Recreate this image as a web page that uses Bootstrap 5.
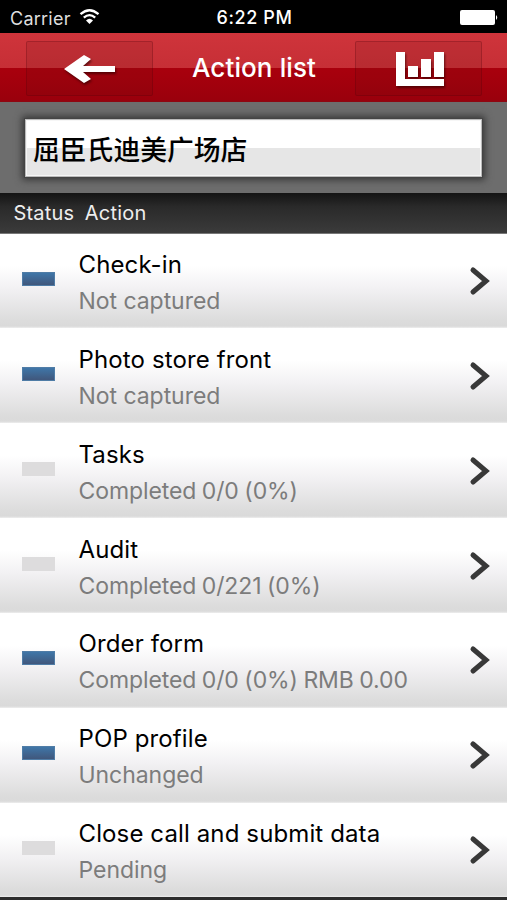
<!DOCTYPE html>
<html lang="en">
<head>
<meta charset="utf-8">
<meta name="viewport" content="width=device-width, initial-scale=1">
<title>Action list</title>
<link href="https://cdn.jsdelivr.net/npm/bootstrap@5.3.0/dist/css/bootstrap.min.css" rel="stylesheet">
<style>
body{font-family:Inter,"Noto Sans CJK SC",sans-serif;background:#2d2d2d;height:900px;overflow:hidden}
.statusbar{height:33px;background:#000;color:#fff;font-size:18px;line-height:37px;padding:0 8px 0 10px}
.statusbar .carrier{color:#dedede;letter-spacing:.25px}
.statusbar .clock{font-weight:500;font-size:18px;letter-spacing:.6px;padding-left:2px;line-height:36px}
.topbar{height:69px;padding:8px 25px 6px 26px;background:linear-gradient(#cf343b 0,#c62f36 35px,#a9000d 35px,#9a000c 67px,#8a0a14 69px)}
.tool{width:127px;height:55px;border:1px solid rgba(80,0,10,.25);border-radius:2px;background:rgba(90,20,20,.12)}
.tool svg{filter:drop-shadow(1px 2px 1px rgba(50,0,0,.65))}
.heading{font-size:26px;font-weight:500;color:#fff;letter-spacing:.1px;line-height:54px}
.storebar{height:90.500px;padding:17px 25px 15px;background:#6d6d6d}
.store{height:58px;border:1px solid #bbb;outline:1px solid #444;background:linear-gradient(#fff 50%,#e6e6e6 50%);box-shadow:0 0 7px 3px #383838,inset 0 0 0 1px #f6f6f6;font-size:26.800px;font-weight:500;color:#000;padding-left:7px;line-height:60px}
.columns{height:41.100px;background:linear-gradient(#141414,#2a2a2a 35%,#3b3b3b);border-bottom:1px solid #777;color:#eee;font-size:20px;line-height:41px;padding-left:13.500px;gap:10.500px;letter-spacing:.2px}
.action{height:94.860px;border:0;border-radius:0;padding:0 17px 0 22px;background:linear-gradient(#fff 0,#fff 34%,#f2f1f3 58%,#dcdcdc 92%,#dadada 98%,#eee 100%)}
.action:last-child{height:94.200px}
.state{width:33px;height:14px;margin-top:-4px;margin-right:23.500px;background:#dddcdd}
.state.done{background:linear-gradient(#3f76a8,#40577c);border:1px solid #4f7ca6}
.label{padding-top:5px}
.name{font-size:24px;line-height:36px;color:#000;letter-spacing:.12px}
.detail{font-size:23px;line-height:37px;color:#7c7c7c;letter-spacing:-.05px}
.detail.progress-note{letter-spacing:-.1px;word-spacing:-.8px}
</style>
</head>
<body>
<header>
  <div class="statusbar d-flex justify-content-between position-relative">
    <div class="d-flex"><span class="carrier">Carrier</span>
      <svg class="ms-2" width="21" height="33" viewBox="0 0 21 33" fill="none" stroke="#fff" stroke-width="2.3"><path d="M1.5 14.2Q10.5 6.3 19.5 14.2M4.8 17.7Q10.500 12.600 16.200 17.700"/><path d="M10.500 24 L7 20.400Q10.500 17.300 14 20.400Z" fill="#fff" stroke="none"/></svg>
    </div>
    <span class="clock position-absolute top-0 start-50 translate-middle-x text-nowrap">6:22 PM</span>
    <svg width="40" height="33" viewBox="0 0 40 33" fill="#fff"><rect x="1" y="10" width="35" height="15" rx="2"/><path d="M37 15q2.500 2.500 0 5z"/></svg>
  </div>
  <nav class="topbar d-flex justify-content-between">
    <div class="tool d-flex align-items-center justify-content-center"><svg width="54" height="30" viewBox="0 0 54 30" fill="#fff"><path d="M1 15 21 1l7 4L20 12H52v6H20l8 7-7 4Z"/></svg></div>
    <div class="heading">Action list</div>
    <div class="tool d-flex align-items-center justify-content-center"><svg width="50" height="36" viewBox="0 0 50 36" fill="#fff"><path d="M2 1H11V28H50V35H2ZM14 15H24V26H14ZM27 8H37V26H27ZM40 1H50V26H40Z"/></svg></div>
  </nav>
</header>
<div class="storebar"><div class="store">屈臣氏迪美广场店</div></div>
<div class="columns d-flex"><span>Status</span><span>Action</span></div>
<main class="list-group list-group-flush">
  <div class="action list-group-item d-flex align-items-center"><i class="state done"></i><div class="label flex-grow-1"><div class="name">Check-in</div><div class="detail">Not captured</div></div><svg width="21" height="30" viewBox="0 0 21 30" fill="none" stroke="#383838" stroke-width="5" stroke-linecap="round"><path d="M4 4 17 15 4 26"/></svg></div>
  <div class="action list-group-item d-flex align-items-center"><i class="state done"></i><div class="label flex-grow-1"><div class="name">Photo store front</div><div class="detail">Not captured</div></div><svg width="21" height="30" viewBox="0 0 21 30" fill="none" stroke="#383838" stroke-width="5" stroke-linecap="round"><path d="M4 4 17 15 4 26"/></svg></div>
  <div class="action list-group-item d-flex align-items-center"><i class="state"></i><div class="label flex-grow-1"><div class="name">Tasks</div><div class="detail progress-note">Completed 0/0 (0%)</div></div><svg width="21" height="30" viewBox="0 0 21 30" fill="none" stroke="#383838" stroke-width="5" stroke-linecap="round"><path d="M4 4 17 15 4 26"/></svg></div>
  <div class="action list-group-item d-flex align-items-center"><i class="state"></i><div class="label flex-grow-1"><div class="name">Audit</div><div class="detail progress-note">Completed 0/221 (0%)</div></div><svg width="21" height="30" viewBox="0 0 21 30" fill="none" stroke="#383838" stroke-width="5" stroke-linecap="round"><path d="M4 4 17 15 4 26"/></svg></div>
  <div class="action list-group-item d-flex align-items-center"><i class="state done"></i><div class="label flex-grow-1"><div class="name">Order form</div><div class="detail progress-note">Completed 0/0 (0%) RMB 0.00</div></div><svg width="21" height="30" viewBox="0 0 21 30" fill="none" stroke="#383838" stroke-width="5" stroke-linecap="round"><path d="M4 4 17 15 4 26"/></svg></div>
  <div class="action list-group-item d-flex align-items-center"><i class="state done"></i><div class="label flex-grow-1"><div class="name">POP profile</div><div class="detail">Unchanged</div></div><svg width="21" height="30" viewBox="0 0 21 30" fill="none" stroke="#383838" stroke-width="5" stroke-linecap="round"><path d="M4 4 17 15 4 26"/></svg></div>
  <div class="action list-group-item d-flex align-items-center"><i class="state"></i><div class="label flex-grow-1"><div class="name">Close call and submit data</div><div class="detail">Pending</div></div><svg width="21" height="30" viewBox="0 0 21 30" fill="none" stroke="#383838" stroke-width="5" stroke-linecap="round"><path d="M4 4 17 15 4 26"/></svg></div>
</main>
<script src="https://cdn.jsdelivr.net/npm/bootstrap@5.3.0/dist/js/bootstrap.bundle.min.js"></script>
</body>
</html>
